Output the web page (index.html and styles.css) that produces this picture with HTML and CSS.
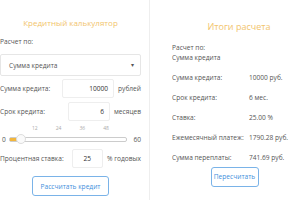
FILE: index.html
```html
<!DOCTYPE html>
<html lang="ru">
<head>
  <meta charset="UTF-8" />
  <title>Кредитный калькулятор</title>
  <link rel="stylesheet" href="styles.css">
</head>
<body>
  <div class="calc">
    <div class="form-panel">
      <div class="title">Кредитный калькулятор</div>

      <div class="label">Расчет по:</div>
      <div class="select">
        <span>Сумма кредита</span>
        <span class="arrow">▾</span>
      </div>

      <div class="field sum">
        <span class="field-label">Сумма кредита:</span>
        <span class="input w-sum">10000</span>
        <span class="unit">рублей</span>
      </div>

      <div class="field term">
        <span class="field-label">Срок кредита:</span>
        <span class="input w-term">6</span>
        <span class="unit">месяцев</span>
      </div>

      <div class="ticks">
        <span>12</span><span>24</span><span>36</span><span>48</span>
      </div>
      <div class="slider-row">
        <span>0</span>
        <div class="track">
          <div class="fill"></div>
          <div class="thumb"></div>
        </div>
        <span>60</span>
      </div>

      <div class="field rate">
        <span class="field-label">Процентная ставка:</span>
        <span class="input w-rate">25</span>
        <span class="unit">% годовых</span>
      </div>

      <div class="actions">
        <button class="btn">Рассчитать кредит</button>
      </div>
    </div>

    <div class="result-panel">
      <div class="title">Итоги расчета</div>
      <div class="basis">
        <div>Расчет по:</div>
        <div>Сумма кредита</div>
      </div>
      <div class="results">
        <span>Сумма кредита:</span><span>10000 руб.</span>
        <span>Срок кредита:</span><span>6 мес.</span>
        <span>Ставка:</span><span>25.00 %</span>
        <span>Ежемесячный платеж:</span><span>1790.28 руб.</span>
        <span>Сумма переплаты:</span><span>741.69 руб.</span>
      </div>
      <div class="actions">
        <button class="btn">Пересчитать</button>
      </div>
    </div>
  </div>
</body>
</html>
```

FILE: styles.css
```css
body {
  margin: 0;
  padding: 0;
  font-family: 'Open Sans', sans-serif;
  font-size: 6.6px;
  color: #555;
  background: #fff;
  white-space: nowrap;
}

.calc {
  display: flex;
  width: 300px;
  height: 200px;
  overflow: hidden;
}

.form-panel {
  width: 150px;
  padding-right: 8px;
  box-sizing: border-box;
  border-right: 1px solid #eee;
}

.result-panel {
  flex: 1;
  padding-left: 22px;
}

.title {
  color: #f2c46c;
  font-size: 8px;
  text-align: center;
  line-height: 14px;
  margin-top: 16px;
}

.result-panel .title {
  font-size: 9px;
  margin-top: 20px;
  margin-left: 6px;
}

.label {
  margin-top: 6px;
  line-height: 12px;
}

.select {
  margin-top: 6px;
  height: 22px;
  border: 1px solid #e6e6e6;
  border-radius: 2px;
  box-sizing: border-box;
  display: flex;
  align-items: center;
  justify-content: space-between;
  padding: 0 6px 0 8px;
}

.select .arrow {
  font-size: 6px;
  color: #555;
}

.field {
  display: flex;
  align-items: center;
  height: 20px;
}

.field.sum { margin-top: 2px; }
.field.term { margin-top: 3px; }
.field.rate { margin-top: 3px; }

.field-label {
  width: 63px;
}

.input {
  height: 19px;
  border: 1px solid #eee;
  border-radius: 2px;
  box-sizing: border-box;
  text-align: right;
  padding-right: 5px;
  line-height: 17px;
  color: #333;
}

.w-sum { width: 53px; }
.w-term { width: 44px; margin-left: 9px; }
.w-rate { width: 33px; margin-left: 9px; padding-right: 11px; }

.unit {
  margin-left: 4px;
}

.ticks {
  display: flex;
  gap: 18px;
  padding-left: 32px;
  margin-top: 3px;
  font-size: 5px;
  color: #aaa;
  line-height: 8px;
}

.slider-row {
  display: flex;
  align-items: center;
  height: 12px;
  margin-top: 1px;
}

.slider-row span:first-child {
  width: 7px;
  padding-left: 2px;
}

.track {
  position: relative;
  width: 120px;
  height: 5px;
  border: 1px solid #ccc;
  border-radius: 2px;
  box-sizing: border-box;
  margin-right: 6px;
}

.fill {
  width: 11px;
  height: 100%;
  background: #f2b63c;
}

.thumb {
  position: absolute;
  left: 6px;
  top: -4px;
  width: 10px;
  height: 10px;
  border-radius: 50%;
  background: #fafafa;
  border: 1px solid #ddd;
  box-sizing: border-box;
}

.actions {
  display: flex;
  justify-content: center;
}

.form-panel .actions {
  margin-top: 8px;
}

.btn {
  font-family: 'Open Sans', sans-serif;
  font-size: 6.6px;
  color: #3f8fdc;
  background: #fff;
  border: 1px solid #7ab3e8;
  border-radius: 3px;
  height: 20px;
  padding: 0;
}

.form-panel .btn {
  width: 77px;
}

.result-panel .btn {
  width: 48px;
  margin-left: -3px;
}

.basis {
  margin-top: 9px;
  line-height: 10px;
}

.results {
  display: grid;
  grid-template-columns: 77px auto;
  grid-auto-rows: 19.8px;
  align-items: center;
  margin-top: 5px;
}
```
